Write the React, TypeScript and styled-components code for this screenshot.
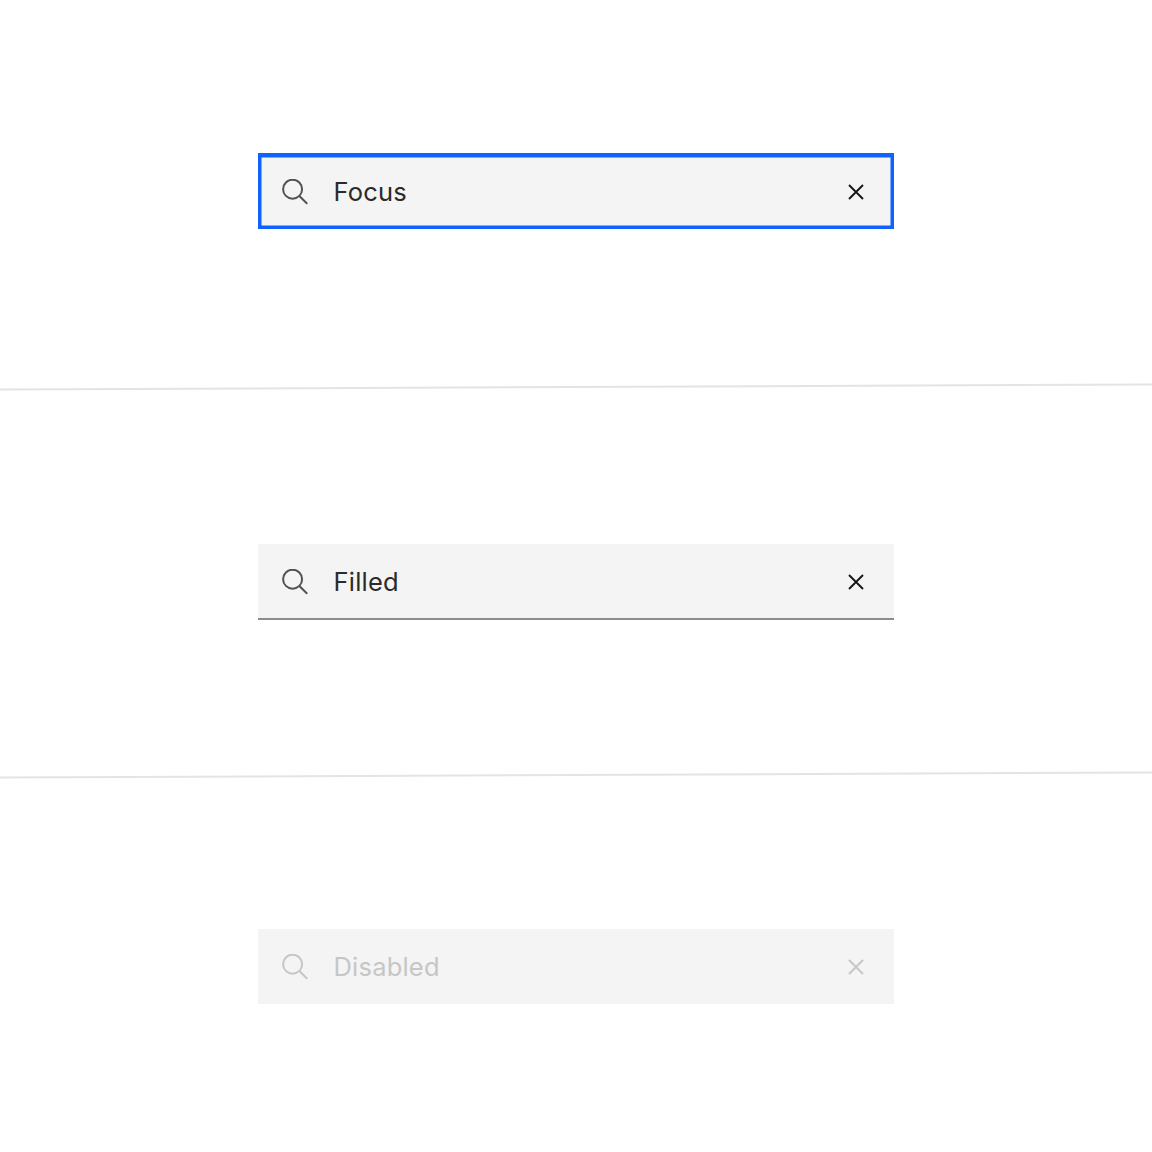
import React from 'react'
import styled, { createGlobalStyle } from 'styled-components'

type FieldState = 'focus' | 'filled' | 'disabled'

const GlobalStyle = createGlobalStyle`
  html, body {
    margin: 0;
    padding: 0;
    background: #fff;
  }
  * {
    box-sizing: border-box;
  }
`

const SearchIcon = ({ color }: { color: string }) => (
  <svg width='26' height='26' viewBox='0 0 26 26' fill='none'>
    <circle cx='10.6' cy='10.2' r='9.5' stroke={color} strokeWidth='2' />
    <path d='M17.4 17 L25.2 24.8' stroke={color} strokeWidth='2' />
  </svg>
)

const ClearIcon = ({ color }: { color: string }) => (
  <svg width='26' height='26' viewBox='0 0 26 26' fill='none'>
    <path d='M6 6 L20 20 M20 6 L6 20' stroke={color} strokeWidth='1.9' />
  </svg>
)

const SearchField = ({ state, label }: { state: FieldState; label: string }) => {
  const disabled = state === 'disabled'

  return (
    <Field $state={state}>
      <SearchIcon color={disabled ? '#c6c6c6' : '#525252'} />
      <Label $disabled={disabled}>{label}</Label>
      <ClearIcon color={disabled ? '#c6c6c6' : '#161616'} />
    </Field>
  )
}

const App = () => (
  <>
    <GlobalStyle />
    <Page>
      <Section $top={154} $bottom={156.5}>
        <SearchField state='focus' label='Focus' />
      </Section>
      <Divider />
      <Section $top={156.5} $bottom={154.5}>
        <SearchField state='filled' label='Filled' />
      </Section>
      <Divider />
      <Section $top={153.5} $bottom={148}>
        <SearchField state='disabled' label='Disabled' />
      </Section>
    </Page>
  </>
)

export default App

const Page = styled.div`
  width: 1152px;
  height: 1152px;
  display: flex;
  flex-direction: column;
  background: #fff;
  overflow: hidden;
`

const Section = styled.section<{ $top: number; $bottom: number }>`
  display: flex;
  justify-content: center;
  padding: ${({ $top }) => $top}px 0 ${({ $bottom }) => $bottom}px;
`

const Divider = styled.hr`
  width: 100%;
  height: 2px;
  flex: none;
  margin: 0;
  border: 0;
  background: #e4e4e4;
  transform: rotate(-0.25deg);
`

const Field = styled.div<{ $state: FieldState }>`
  width: 636px;
  height: 75px;
  display: flex;
  align-items: center;
  padding: 0 25px 0 24px;
  background: #f4f4f4;
  box-shadow: ${({ $state }) =>
    $state === 'focus'
      ? 'inset 0 0 0 3.5px #0f62fe, 0 -1px 0 0 #0f62fe'
      : $state === 'filled'
        ? 'inset 0 -1px 0 #8d8d8d, 0 1px 0 #8d8d8d'
        : 'none'};
`

const Label = styled.span<{ $disabled: boolean }>`
  flex: 1;
  margin-left: 25.5px;
  font-family: 'Inter', 'Noto Sans', sans-serif;
  font-size: 25.5px;
  line-height: 32px;
  letter-spacing: 0.2px;
  color: ${({ $disabled }) => ($disabled ? '#c6c6c6' : '#2b2b2b')};
`
